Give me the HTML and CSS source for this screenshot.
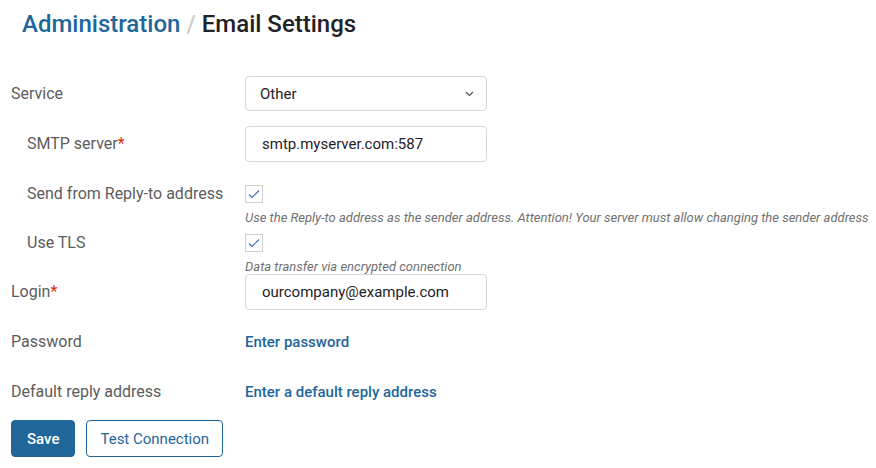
FILE: index.html
```html
<!DOCTYPE html>
<html lang="en">
<head>
<meta charset="utf-8">
<title>Email Settings</title>
<meta name="viewport" content="width=device-width, initial-scale=1">
<link rel="stylesheet" href="styles.css">
</head>
<body>
<header class="page-header">
  <h1 class="breadcrumb"><a href="#">Administration</a><span class="separator">/</span><span>Email Settings</span></h1>
</header>
<main>
  <form class="settings">
    <div class="row">
      <label class="label" for="service">Service</label>
      <div class="select-wrap">
        <select class="control select" id="service"><option>Other</option></select>
        <svg class="chevron" viewBox="0 0 9 6" aria-hidden="true"><path d="M1 1l3.5 3.5L8 1"/></svg>
      </div>
    </div>
    <div class="row">
      <label class="label nested" for="smtp">SMTP server<span class="required">*</span></label>
      <input class="control" id="smtp" type="text" value="smtp.myserver.com:587">
    </div>
    <div class="row with-hint">
      <label class="label nested" for="reply-to">Send from Reply-to address</label>
      <div>
        <div class="check-line">
          <input class="checkbox" id="reply-to" type="checkbox" checked>
          <svg class="tick" viewBox="0 0 18 18" aria-hidden="true"><path d="M4 9.5l3 3L14 5.500"/></svg>
        </div>
        <p class="hint">Use the Reply-to address as the sender address. Attention! Your server must allow changing the sender address</p>
      </div>
    </div>
    <div class="row with-hint">
      <label class="label nested" for="tls">Use TLS</label>
      <div>
        <div class="check-line">
          <input class="checkbox" id="tls" type="checkbox" checked>
          <svg class="tick" viewBox="0 0 18 18" aria-hidden="true"><path d="M4 9.5l3 3L14 5.500"/></svg>
        </div>
        <p class="hint">Data transfer via encrypted connection</p>
      </div>
    </div>
    <div class="row">
      <label class="label" for="login">Login<span class="required">*</span></label>
      <input class="control" id="login" type="text" value="ourcompany@example.com">
    </div>
    <div class="row">
      <span class="label">Password</span>
      <a class="action" href="#">Enter password</a>
    </div>
    <div class="row">
      <span class="label">Default reply address</span>
      <a class="action" href="#">Enter a default reply address</a>
    </div>
    <div class="buttons">
      <button class="button primary" type="submit">Save</button>
      <button class="button" type="button">Test Connection</button>
    </div>
  </form>
</main>
</body>
</html>
```
FILE: styles.css
```css
* {
  box-sizing: border-box;
}

body {
  margin: 0;
  background: #fff;
  color: #1f2226;
  font-family: Roboto, "Liberation Sans", sans-serif;
  font-size: 15px;
}

a {
  color: #1f669b;
  text-decoration: none;
}

.page-header {
  padding: 8px 22px 36px;
}

.breadcrumb {
  display: flex;
  gap: 6px;
  margin: 0;
  font-size: 24px;
  font-weight: 500;
  line-height: 32px;
}

.separator {
  color: #ccc;
}

.settings {
  padding: 0 6px 10px 11px;
}

.row {
  display: grid;
  grid-template-columns: 234px 1fr;
  align-items: start;
  margin-bottom: 14px;
}

.row.with-hint {
  margin-bottom: 0;
}

.label {
  color: #5c5c5c;
  font-size: 16px;
  line-height: 36px;
}

.nested {
  padding-left: 16px;
}

.required {
  color: #e02b20;
}

.control {
  width: 242px;
  height: 36px;
  padding: 0 16px;
  border: 1px solid #d6d6d6;
  border-radius: 4px;
  background: #fff;
  color: #1f2226;
  font: inherit;
}

.select-wrap {
  position: relative;
  width: 242px;
}

.select {
  display: block;
  height: 35px;
  padding: 0 14px;
  appearance: none;
}

.chevron {
  position: absolute;
  top: 15px;
  right: 13px;
  width: 9px;
  height: 6px;
  fill: none;
  stroke: #555;
  stroke-width: 1.2;
  pointer-events: none;
}

.check-line {
  display: flex;
  align-items: center;
  position: relative;
  height: 35px;
}

.checkbox {
  width: 18px;
  height: 18px;
  margin: 0;
  border: 1px solid #d0d0d0;
  background: #fff;
  appearance: none;
}

.tick {
  position: absolute;
  left: 0;
  width: 18px;
  height: 18px;
  fill: none;
  stroke: #3f70a8;
  stroke-width: 1.2;
  visibility: hidden;
  pointer-events: none;
}

.checkbox:checked + .tick {
  visibility: visible;
}

.hint {
  margin: 0;
  color: #707070;
  font-size: 13px;
  font-style: italic;
  line-height: 14px;
}

.action {
  justify-self: start;
  font-weight: 500;
  line-height: 36px;
}

.buttons {
  display: flex;
  gap: 11px;
  margin-top: -4px;
}

.button {
  height: 37px;
  padding: 0 13px;
  border: 1px solid #1f669b;
  border-radius: 4px;
  background: #fff;
  color: #1f669b;
  font: inherit;
}

.primary {
  padding: 0 15px;
  background: #1f669b;
  color: #fff;
  font-weight: 500;
}
```
